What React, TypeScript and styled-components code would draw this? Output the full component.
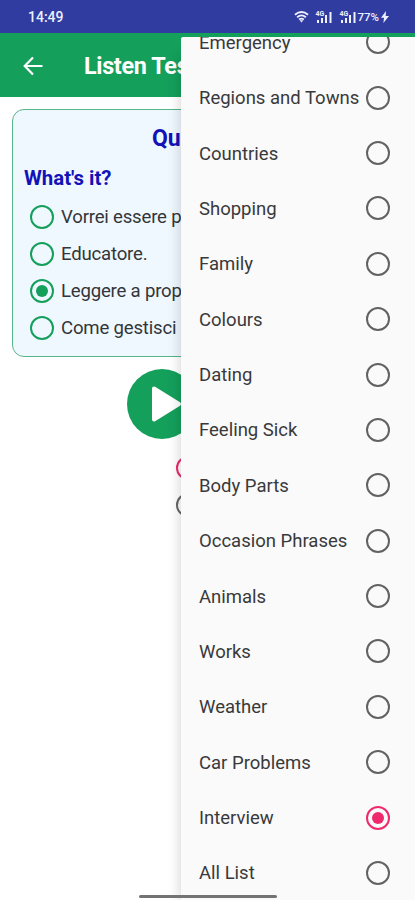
import React from "react";
import styled, { createGlobalStyle } from "styled-components";

const GREEN = "#149f5b";
const PINK = "#ee2a6c";

const GlobalStyle = createGlobalStyle`
  * { box-sizing: border-box; }
  body { margin: 0; background: #fff; font-family: Roboto, "Liberation Sans", sans-serif; }
`;

const Screen = styled.div`
  position: relative;
  width: 415px;
  height: 900px;
  overflow: hidden;
  background: #fff;
  display: flex;
  flex-direction: column;
`;

const StatusBar = styled.header`
  flex: none;
  height: 33px;
  padding: 0 26px 0 28px;
  background: #303c9f;
  color: #eef0ff;
  display: flex;
  align-items: center;
  justify-content: space-between;
`;

const Clock = styled.span`
  font-size: 14px;
  font-weight: 500;
`;

const StatusIcons = styled.div`
  display: flex;
  align-items: center;
  height: 16px;

  svg { display: block; }
`;

const Battery = styled.span`
  font-size: 11.5px;
  font-weight: 500;
  margin: 0 2px 0 0;
`;

const AppBar = styled.div`
  flex: none;
  height: 64px;
  background: ${GREEN};
  color: #fff;
  display: flex;
  align-items: center;
  padding: 2px 0 0 23px;
  gap: 41px;

  svg { display: block; }
`;

const Title = styled.h1`
  margin: 0;
  font-size: 23.4px;
  font-weight: 700;
  letter-spacing: -0.35px;
  white-space: nowrap;
`;

const QuestionCard = styled.section`
  flex: none;
  margin: 12px 12px 0;
  height: 248px;
  border: 1px solid #58b48a;
  border-radius: 12px;
  background: #f0f8ff;
  padding: 14px 11px 0;
`;

const CardTitle = styled.h2`
  margin: 0 0 0 128px;
  font-size: 23px;
  line-height: 30px;
  font-weight: 700;
  color: #1212b8;
`;

const Prompt = styled.p`
  margin: 11px 0 7px;
  font-size: 20.4px;
  line-height: 26px;
  font-weight: 700;
  color: #1212b8;
`;

const Answer = styled.div`
  height: 37px;
  padding-left: 6px;
  display: flex;
  align-items: center;
  gap: 7px;
  font-size: 18.6px;
  letter-spacing: -0.2px;
  color: #333639;
  white-space: nowrap;
`;

const Ring = styled.span<{ $color: string; $width?: number }>`
  flex: none;
  width: 24px;
  height: 24px;
  border: ${(p) => p.$width ?? 2}px solid ${(p) => p.$color};
  border-radius: 50%;
  display: flex;
  align-items: center;
  justify-content: center;
`;

const Dot = styled.span<{ $color: string }>`
  width: 12px;
  height: 12px;
  border-radius: 50%;
  background: ${(p) => p.$color};
`;

const PlayButton = styled.div`
  flex: none;
  width: 70px;
  height: 70px;
  margin: 12px 0 0 127px;
  border-radius: 50%;
  background: ${GREEN};

  svg { display: block; }
`;

const Modes = styled.div`
  display: flex;
  flex-direction: column;
  gap: 13px;
  margin: 17px 0 0 176px;
`;

const Menu = styled.aside`
  position: absolute;
  left: 181px;
  top: 37px;
  right: 0;
  bottom: 0;
  overflow: hidden;
  border-top-left-radius: 2px;
  background: #fafafa;
`;

const MenuShadow = styled.div`
  position: absolute;
  left: 181px;
  top: 54px;
  right: 0;
  bottom: 0;
  box-shadow: -1px 2px 12px rgba(0, 0, 0, 0.17);
`;

const MenuList = styled.div`
  margin-top: -22.4px;
`;

const MenuRow = styled.div`
  height: 55.38px;
  padding: 0 25px 0 18px;
  display: flex;
  align-items: center;
  justify-content: space-between;
  font-size: 18.5px;
  color: #39393b;
  white-space: nowrap;
`;

const MenuLabel = styled.span`
  padding-top: 1px;
`;

const HomeIndicator = styled.div`
  position: absolute;
  left: 139px;
  bottom: 2px;
  width: 138px;
  height: 3px;
  border-radius: 2px;
  background: #737373;
`;

function Radio({ checked, color, width }: { checked?: boolean; color: string; width?: number }) {
  return (
    <Ring $color={color} $width={width}>
      {checked && <Dot $color={color} />}
    </Ring>
  );
}

function Wifi() {
  return (
    <svg width="15" height="14" viewBox="0 0 16 14" fill="none" stroke="#eef0ff" strokeWidth="2">
      <path d="M1 4.5Q8 -1 15 4.5M3.3 7.2Q8 3.4 12.7 7.2M5.5 9.7Q8 7.7 10.5 9.7" />
      <path d="M6 10.4h4L8 12.8z" fill="#eef0ff" stroke="none" />
    </svg>
  );
}

const SignalWrap = styled.span`
  display: flex;
  align-items: flex-end;
  gap: 1px;
  width: 18px;
  height: 13px;
  margin-left: 6px;
`;

const SignalStart = styled.span`
  display: flex;
  flex-direction: column;
  align-items: center;
  gap: 1px;
  font-size: 7px;
  line-height: 6px;
  font-weight: 700;
`;

function Signal() {
  return (
    <SignalWrap>
      <SignalStart>
        4G
        <svg width="8" height="5" viewBox="0 0 8 5" fill="#eef0ff">
          <path d="M1 2h2v3H1zM5 0h2v5H5z" />
        </svg>
      </SignalStart>
      <svg width="8" height="12" viewBox="0 0 8 12" fill="#eef0ff">
        <path d="M0 4h2v8H0zM4.5 1h2v11h-2z" />
      </svg>
    </SignalWrap>
  );
}

const answers = [
  { text: "Vorrei essere p" },
  { text: "Educatore." },
  { text: "Leggere a prop", checked: true },
  { text: "Come gestisci" },
];

const topics = [
  "Emergency",
  "Regions and Towns",
  "Countries",
  "Shopping",
  "Family",
  "Colours",
  "Dating",
  "Feeling Sick",
  "Body Parts",
  "Occasion Phrases",
  "Animals",
  "Works",
  "Weather",
  "Car Problems",
  "Interview",
  "All List",
];

export default function App() {
  return (
    <Screen>
      <GlobalStyle />
      <StatusBar>
        <Clock>14:49</Clock>
        <StatusIcons>
          <Wifi />
          <Signal />
          <Signal />
          <Battery>77%</Battery>
          <svg width="8" height="12" viewBox="0 0 8 12" fill="#eef0ff">
            <path d="M5 0L0 6.8h3L2.4 12 8 5H4.7z" />
          </svg>
        </StatusIcons>
      </StatusBar>
      <AppBar>
        <svg width="20" height="20" viewBox="0 0 20 20" fill="none" stroke="#fff" strokeWidth="2.2">
          <path d="M19.5 10H2.5M10 1.5L1.7 10l8.3 8.5" />
        </svg>
        <Title>Listen Tes</Title>
      </AppBar>
      <QuestionCard>
        <CardTitle>Qu</CardTitle>
        <Prompt>What's it?</Prompt>
        {answers.map((a) => (
          <Answer key={a.text}>
            <Radio checked={a.checked} color={GREEN} width={2.4} />
            {a.text}
          </Answer>
        ))}
      </QuestionCard>
      <PlayButton>
        <svg width="70" height="70" viewBox="0 0 70 70">
          <path d="M27 19.5L52 35L27 50.5z" fill="#fff" stroke="#fff" strokeWidth="4" strokeLinejoin="round" />
        </svg>
      </PlayButton>
      <Modes>
        <Radio color={PINK} />
        <Radio color="#66666a" />
      </Modes>
      <MenuShadow />
      <Menu>
        <MenuList>
          {topics.map((topic) => {
            const checked = topic === "Interview";
            return (
              <MenuRow key={topic}>
                <MenuLabel>{topic}</MenuLabel>
                <Radio checked={checked} color={checked ? PINK : "#626264"} />
              </MenuRow>
            );
          })}
        </MenuList>
      </Menu>
      <HomeIndicator />
    </Screen>
  );
}
